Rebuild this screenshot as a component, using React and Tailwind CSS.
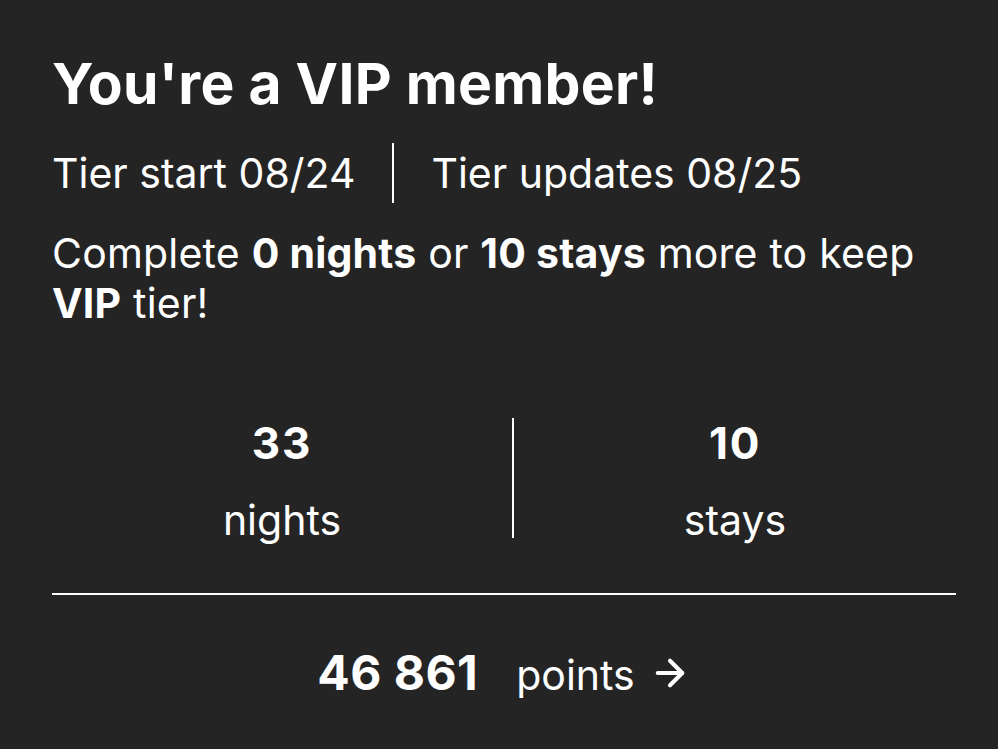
import { ArrowRight } from "lucide-react";

export default function App() {
  return (
    <div className="min-h-[749px] w-full bg-[#242424] text-white font-['Inter',sans-serif]">
      <div className="pl-[52px] pr-[42px] pt-[52px]">
        {/* Header */}
        <h1 className="text-[57px] font-bold leading-[64px] tracking-[0.005em]">You're a VIP member!</h1>

        <div className="mt-[27px] flex items-center text-[41px] leading-[46px]">
          <span>Tier start 08/24</span>
          <div className="mx-[37px] h-[60px] w-[2px] bg-white" />
          <span>Tier updates 08/25</span>
        </div>

        <p className="mt-[25px] text-[41px] leading-[50px] tracking-[0.005em]">
          Complete <b className="font-bold">0 nights</b> or <b className="font-bold">10 stays</b> more to keep{" "}
          <b className="font-bold">VIP</b> tier!
        </p>

        {/* Stats */}
        <div className="mt-[90px] flex">
          <div className="flex w-[460px] flex-col items-center">
            <span className="text-[44px] font-bold leading-[50px] tracking-[0.04em]">33</span>
            <span className="mt-[29px] text-[41px] leading-[46px]">nights</span>
          </div>
          <div className="h-[120px] w-[2px] bg-white" />
          <div className="flex flex-1 flex-col items-center">
            <span className="text-[44px] font-bold leading-[50px] tracking-[0.04em]">10</span>
            <span className="mt-[29px] text-[41px] leading-[46px]">stays</span>
          </div>
        </div>

        <div className="mt-[50px] h-[2px] bg-white" />

        {/* Points */}
        <div className="mt-[50px] flex items-baseline justify-center">
          <span className="text-[48px] font-bold leading-[56px] tracking-[0.01em]">46 861</span>
          <span className="ml-[38px] text-[41px] leading-[46px]">points</span>
          <ArrowRight size={42} strokeWidth={2.3} className="ml-[14px] self-center" />
        </div>
      </div>
    </div>
  );
}
